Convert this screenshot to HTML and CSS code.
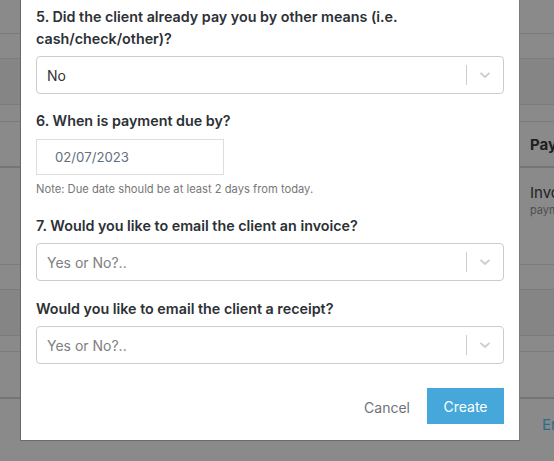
FILE: index.html
```html
<!DOCTYPE html>
<html>
<head>
<meta charset="utf-8">
<link rel="stylesheet" href="styles.css">
</head>
<body>
<div class="page">
  <div class="row h33"></div>
  <div class="row h25"></div>
  <div class="row h46 dark"></div>
  <div class="row h17"></div>
  <div class="row h46 head thick"><span class="pay">Pay</span></div>
  <div class="row h97 inv"><span class="invo">Invo</span><span class="paym">paym</span></div>
  <div class="row h25"></div>
  <div class="row h46 dark"></div>
  <div class="row h16"></div>
  <div class="row h47 thick"></div>
  <div class="row last"><span class="en">En</span></div>
</div>

<div class="modal">
  <div class="field">
    <div class="label">5. Did the client already pay you by other means (i.e. cash/check/other)?</div>
    <div class="select"><span class="value">No</span><span class="sep"></span><span class="chev"><svg width="12" height="8" viewBox="0 0 12 8"><path d="M1.5 1.8 L6 6 L10.5 1.8" fill="none" stroke="#cccccc" stroke-width="1.8"/></svg></span></div>
  </div>
  <div class="field f6">
    <div class="label">6. When is payment due by?</div>
    <div class="date">02/07/2023</div>
    <div class="note">Note: Due date should be at least 2 days from today.</div>
  </div>
  <div class="field f7">
    <div class="label">7. Would you like to email the client an invoice?</div>
    <div class="select"><span class="value ph">Yes or No?..</span><span class="sep"></span><span class="chev"><svg width="12" height="8" viewBox="0 0 12 8"><path d="M1.5 1.8 L6 6 L10.5 1.8" fill="none" stroke="#cccccc" stroke-width="1.8"/></svg></span></div>
  </div>
  <div class="field f8">
    <div class="label">Would you like to email the client a receipt?</div>
    <div class="select"><span class="value ph">Yes or No?..</span><span class="sep"></span><span class="chev"><svg width="12" height="8" viewBox="0 0 12 8"><path d="M1.5 1.8 L6 6 L10.5 1.8" fill="none" stroke="#cccccc" stroke-width="1.8"/></svg></span></div>
  </div>
  <div class="actions">
    <span class="cancel">Cancel</span>
    <span class="create">Create</span>
  </div>
</div>
</body>
</html>
```

FILE: styles.css
```css
* { box-sizing: border-box; }
html, body { margin: 0; padding: 0; }
body {
  width: 554px;
  height: 461px;
  overflow: hidden;
  background: #8a8a8a;
  font-family: Inter, "Noto Sans", sans-serif;
  position: relative;
}
.page { display: flex; flex-direction: column; }
.row { border-bottom: 1px solid #7b7b7b; position: relative; }
.row.thick { border-bottom: 2px solid #727579; }
.row.dark { background: #858585; }
.h33 { height: 34px; }
.h25 { height: 25px; }
.h46 { height: 46px; }
.h17 { height: 17px; }
.h16 { height: 16px; }
.h47 { height: 47px; }
.h97 { height: 97px; }
.last { height: 63px; border-bottom: none; }
.head { display: flex; align-items: center; padding-left: 530px; }
.pay { font-weight: 700; font-size: 15px; color: #1d2023; white-space: nowrap; }
.inv { display: flex; flex-direction: column; padding-left: 530px; padding-top: 15px; }
.invo { font-size: 15px; color: #1f2225; line-height: 20px; white-space: nowrap; }
.paym { font-size: 11px; color: #4e4e4e; line-height: 14px; white-space: nowrap; }
.last { padding-left: 542px; padding-top: 15px; }
.en { font-size: 15px; color: #2b6c8a; white-space: nowrap; }

.modal {
  position: absolute;
  left: 20px;
  top: 0;
  width: 500px;
  height: 441px;
  background: #fff;
  border-left: 1px solid #6a6a6a;
  border-right: 1px solid #7a7a7a;
  border-bottom: 1px solid #6a6a6a;
  padding: 6px 15px 0 15px;
  display: flex;
  flex-direction: column;
}
.label {
  font-weight: 600;
  font-size: 14.3px;
  line-height: 22px;
  color: #2c3136;
  width: 440px;
}
.select {
  margin-top: 6px;
  height: 38px;
  width: 468px;
  border: 1px solid #cccccc;
  border-radius: 4px;
  display: flex;
  align-items: center;
  padding-left: 10px;
}
.value { flex: 1; font-size: 14px; color: #333; }
.value.ph { color: #808080; }
.sep { width: 1px; height: 20px; background: #cccccc; }
.chev { width: 36px; display: flex; justify-content: center; align-items: center; }
.f6 { margin-top: 16px; }
.date {
  margin-top: 7px;
  width: 188px;
  height: 36px;
  border: 1px solid #dddddd;
  padding-left: 18px;
  display: flex;
  align-items: center;
  font-size: 13.2px;
  color: #5f6f7e;
}
.note { margin-top: 7px; font-size: 11.2px; line-height: 14px; color: #777; }
.f7 { margin-top: 19px; }
.f8 { margin-top: 17px; }
.actions {
  margin-top: 24px;
  display: flex;
  justify-content: flex-end;
  align-items: center;
  gap: 17px;
}
.cancel { font-size: 14px; color: #6b737a; padding-top: 2px; }
.create {
  width: 77px;
  height: 36px;
  background: #46a8da;
  color: #fff;
  font-size: 14px;
  display: flex;
  align-items: center;
  justify-content: center;
}
```
